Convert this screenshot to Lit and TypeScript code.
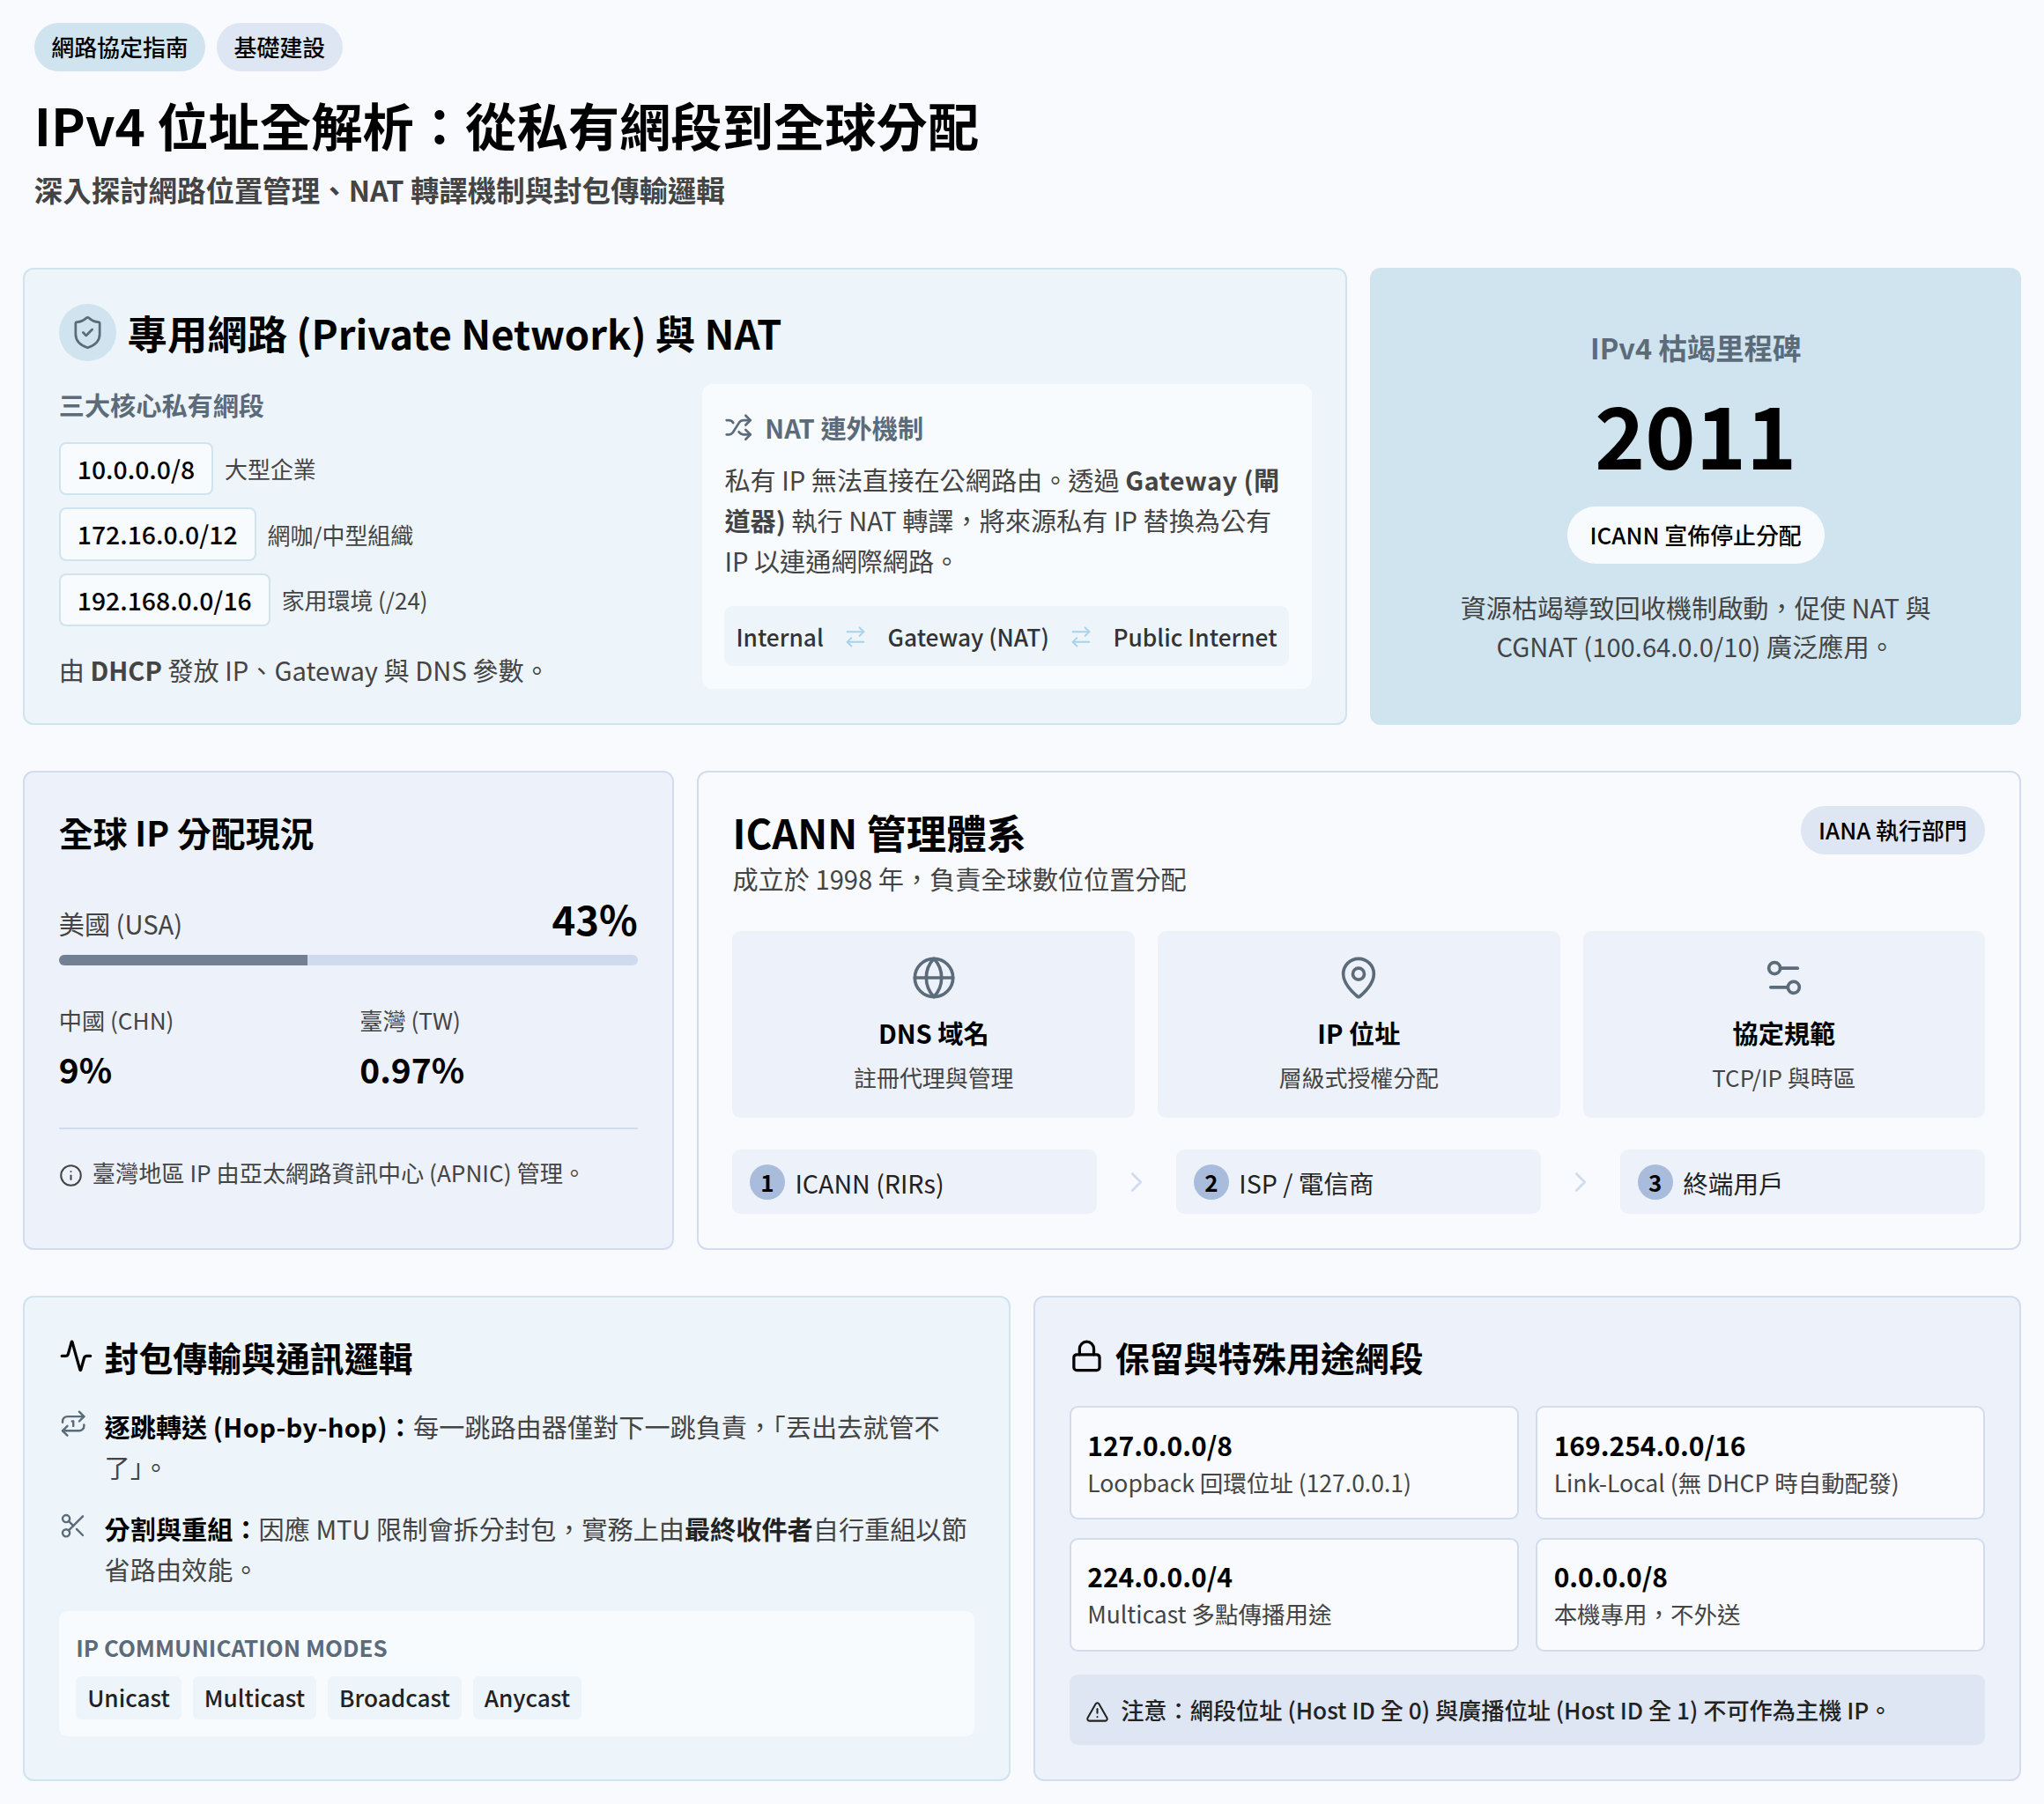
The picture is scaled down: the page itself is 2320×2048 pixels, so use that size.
import { LitElement, html, css, svg } from "lit";
import { customElement } from "lit/decorators.js";

const I: Record<string, any> = {
  shield: svg`<path d="M20 13c0 5-3.5 7.5-7.66 8.95a1 1 0 0 1-.67-.01C7.5 20.5 4 18 4 13V6a1 1 0 0 1 1-1c2 0 4.5-1.2 6.24-2.72a1.17 1.17 0 0 1 1.52 0C14.51 3.81 17 5 19 5a1 1 0 0 1 1 1z"/><path d="m9 12 2 2 4-4"/>`,
  shuffle: svg`<path d="m18 14 4 4-4 4"/><path d="m18 2 4 4-4 4"/><path d="M2 18h1.973a4 4 0 0 0 3.3-1.7l5.454-8.6a4 4 0 0 1 3.3-1.7H22"/><path d="M2 6h1.972a4 4 0 0 1 3.6 2.2"/><path d="M22 18h-6.041a4 4 0 0 1-3.3-1.8l-.359-.45"/>`,
  swap: svg`<path d="m16 3 4 4-4 4"/><path d="M20 7H4"/><path d="m8 21-4-4 4-4"/><path d="M4 17h16"/>`,
  globe: svg`<circle cx="12" cy="12" r="10"/><path d="M12 2a14.5 14.5 0 0 0 0 20 14.5 14.5 0 0 0 0-20"/><path d="M2 12h20"/>`,
  pin: svg`<path d="M20 10c0 4.993-5.539 10.193-7.399 11.799a1 1 0 0 1-1.202 0C9.539 20.193 4 14.993 4 10a8 8 0 0 1 16 0"/><circle cx="12" cy="10" r="3"/>`,
  sliders: svg`<path d="M14 17H5"/><path d="M19 7h-9"/><circle cx="17" cy="17" r="3"/><circle cx="7" cy="7" r="3"/>`,
  info: svg`<circle cx="12" cy="12" r="10"/><path d="M12 16v-4"/><path d="M12 8h.01"/>`,
  activity: svg`<path d="M22 12h-2.48a2 2 0 0 0-1.93 1.46l-2.35 8.36a.25.25 0 0 1-.48 0L9.24 2.18a.25.25 0 0 0-.48 0l-2.35 8.36A2 2 0 0 1 4.49 12H2"/>`,
  repeat: svg`<path d="m17 2 4 4-4 4"/><path d="M3 11v-1a4 4 0 0 1 4-4h14"/><path d="m7 22-4-4 4-4"/><path d="M21 13v1a4 4 0 0 1-4 4H3"/><path d="M11 10h1v4"/>`,
  scissors: svg`<circle cx="6" cy="6" r="3"/><path d="M8.12 8.12 12 12"/><path d="M20 4 8.12 15.88"/><circle cx="6" cy="18" r="3"/><path d="M14.8 14.8 20 20"/>`,
  lock: svg`<rect x="3" y="11" width="18" height="11" rx="2"/><path d="M7 11V7a5 5 0 0 1 10 0v4"/>`,
  alert: svg`<path d="m21.73 18-8-14a2 2 0 0 0-3.48 0l-8 14A2 2 0 0 0 4 21h16a2 2 0 0 0 1.73-3"/><path d="M12 9v4"/><path d="M12 17h.01"/>`,
  chevron: svg`<path d="m9 18 6-6-6-6"/>`,
};
const icon = (n: string, cls: string) =>
  html`<svg class="${cls}" viewBox="0 0 24 24" fill="none" stroke="currentColor" stroke-width="2" stroke-linecap="round" stroke-linejoin="round">${I[n]}</svg>`;

@customElement("app-root")
export class AppRoot extends LitElement {
  static styles = css`
    :host { display: block; background: #f8fafd; color: #000; font-family: "Noto Sans CJK TC", "Noto Sans", sans-serif; font-size: 29.16px; line-height: 1.6; min-height: 2048px; }
    * { box-sizing: border-box; }
    .page { padding: 26px 25.92px 26px; }
    header { padding: 0 12.96px; margin-bottom: 67.2px; }
    .tags { display: flex; gap: 12.96px; margin-bottom: 22px; }
    .tag { font-size: 25.92px; font-weight: 500; padding: 6.48px 19.44px; border-radius: 32px; line-height: 42px; }
    .t1 { background: #cfe4ef; } .t2 { background: #dee5f3; }
    h1 { font-size: 58.32px; line-height: 1.3; font-weight: 700; margin: 0 0 13px; }
    .sub { font-size: 32.45px; line-height: 1.4; font-weight: 700; color: #444; margin: 0; }
    .grid { display: grid; grid-template-columns: repeat(6, 1fr); gap: 52px 25.92px; }
    .card { border-radius: 12px; padding: 38.88px; border: 2px solid; }
    .blue { background: #edf4fa; border-color: #cfe4ef; }
    .lav { background: #edf1f9; border-color: #d2dcef; }
    .white { background: #f8fafd; border-color: #d2dcef; }
    .s4 { grid-column: span 4; } .s2 { grid-column: span 2; } .s3 { grid-column: span 3; }

    .nat-title { display: flex; align-items: center; gap: 13px; margin-bottom: 25.92px; height: 64.8px; }
    .badge { width: 64.8px; height: 64.8px; border-radius: 50%; background: #cfe4ef; display: flex; align-items: center; justify-content: center; color: #5c6b7a; }
    .i32 { width: 41px; height: 41px; stroke-width: 1.6; }
    h2 { font-size: 45.36px; line-height: 1.4; font-weight: 700; margin: 0; }
    .cols { display: grid; grid-template-columns: 1fr 692px; gap: 32px; align-items: stretch; }
    .lbl { font-size: 29.16px; font-weight: 700; color: #5c6b7a; line-height: 46.66px; margin-bottom: 19px; }
    .net { display: flex; align-items: center; gap: 12.96px; margin-bottom: 14px; font-size: 25.92px; color: #444; }
    .code { font-size: 28.35px; font-weight: 500; color: #000; background: #f8fbfe; border: 2px solid #cfe4ef; border-radius: 8px; padding: 5px 19px; line-height: 46px; height: 60.5px; }
    .note { font-size: 29.16px; color: #444; margin: 31px 0 0; line-height: 36px; }
    b { font-weight: 700; }
    .panel { background: #f8fbfe; border-radius: 12px; padding: 25.92px; }
    .ph { display: flex; align-items: center; gap: 13.5px; font-size: 29.16px; font-weight: 700; color: #5c6b7a; line-height: 46.66px; margin-bottom: 12.2px; }
    .i30 { width: 32.4px; height: 32.4px; }
    .ptext { margin: 0; color: #444; font-size: 29.16px; line-height: 46.2px; }
    .ls { letter-spacing: 0.35px; }
    .flow { margin-top: 28.8px; background: #edf4fa; border-radius: 9.6px; height: 68px; padding: 2px 13px 0; display: flex; align-items: center; justify-content: space-between; font-size: 26.25px; color: #333; font-weight: 500; }
    .flow svg { width: 28px; height: 28px; color: #a9d2e9; stroke-width: 1.7; }

    .hero { grid-column: span 2; background: #cfe4ef; border-radius: 12px; display: flex; flex-direction: column; align-items: center; justify-content: center; text-align: center; padding: 38px; }
    .h-lbl { font-size: 32.4px; font-weight: 700; color: #5c6b7a; line-height: 1.4; }
    .year { font-size: 97.2px; font-weight: 700; line-height: 1.2; margin: 16px 0 26px; }
    .pill { background: #f8fbfe; border-radius: 32px; font-size: 25.92px; font-weight: 500; padding: 11px 25.92px 13px; line-height: 41px; }
    .h-txt { font-size: 29.16px; color: #444; line-height: 44.4px; margin: 26.5px 0 0; }

    .s-title { font-size: 38.88px; font-weight: 700; line-height: 1.5; margin: -0.5px 0 39.5px; }
    .us { display: flex; justify-content: space-between; align-items: flex-end; font-size: 29.16px; color: #444; }
    .us strong { font-size: 45.36px; font-weight: 700; color: #000; line-height: 1.3; }
    .bar { height: 12px; border-radius: 6px; background: #cfdaee; overflow: hidden; margin-top: 12px; }
    .bar i { display: block; height: 100%; background: #737f92; }
    .two { display: grid; grid-template-columns: 1fr 1fr; gap: 0 25.92px; margin-top: 41.5px; }
    .two span { display: block; font-size: 26.2px; color: #444; line-height: 41.5px; }
    .two strong { display: block; font-size: 38.88px; font-weight: 700; line-height: 1.5; margin-top: 5px; }
    .foot { border-top: 2px solid #d2dcef; margin-top: 38px; padding-top: 28.5px; display: flex; align-items: center; gap: 11px; font-size: 26.2px; color: #444; line-height: 1.6; }
    .i24 { width: 27px; height: 27px; flex: none; margin-top: 5px; stroke-width: 1.8; }

    .ic-head { display: flex; justify-content: space-between; align-items: flex-start; margin: -1px 0 37.5px; }
    .ic-head h2 { line-height: 1.3; }
    .ic-head p { margin: 2.5px 0 0; font-size: 29.16px; color: #444; line-height: 1.5; }
    .pill2 { background: #dee5f3; border-radius: 32px; font-size: 25.92px; font-weight: 500; padding: 6.48px 20.5px; line-height: 42px; }
    .three { display: grid; grid-template-columns: repeat(3, 1fr); gap: 25.92px; }
    .tile { background: #edf1f9; border-radius: 9.6px; padding: 27px 25.6px 25.6px; display: flex; flex-direction: column; align-items: center; text-align: center; color: #5c6b7a; height: 211.5px; }
    .i48 { width: 52px; height: 52px; stroke-width: 1.7; }
    .tile strong { font-size: 29.16px; font-weight: 700; color: #000; margin-top: 12.5px; line-height: 46px; }
    .tile span { font-size: 25.92px; color: #444; line-height: 41px; margin-top: 7px; }
    .steps { display: grid; grid-template-columns: 1fr 90px 1fr 90px 1fr; align-items: center; margin-top: 36.5px; }
    .step { background: #edf1f9; border-radius: 9.6px; height: 73px; display: flex; align-items: center; gap: 11.5px; padding: 2px 19.44px 0; font-size: 28.6px; color: #222; }
    .num { width: 40px; height: 40px; border-radius: 50%; background: #a9bcdc; color: #000; font-size: 25.92px; font-weight: 700; display: flex; align-items: center; justify-content: center; margin-top: -2px; }
    .steps > svg { width: 38px; height: 38px; justify-self: center; color: #d2dcef; stroke-width: 1.7; }

    .h3 { display: flex; align-items: center; gap: 12.96px; font-size: 38.88px; font-weight: 700; line-height: 1.5; margin: -1.5px 0 27.42px; }
    .i36 { width: 38.88px; height: 38.88px; flex: none; }
    .li { display: flex; gap: 19.44px; font-size: 29.16px; color: #444; line-height: 46px; margin-bottom: 24px; }
    .li svg { width: 32.4px; height: 32.4px; flex: none; color: #5c6b7a; margin-top: 4px; stroke-width: 1.8; }
    .li b.k { color: #000; }
    .li b { color: #222; }
    .modes { background: #f8fbfe; border-radius: 9.6px; padding: 19.44px; margin-top: 25px; }
    .modes h4 { margin: 0 0 13px; font-size: 25.92px; font-weight: 700; color: #5c6b7a; line-height: 1.6; }
    .chips { display: flex; gap: 12.96px; }
    .chip { background: #edf4fa; border-radius: 6.4px; padding: 0 12.96px; font-size: 26.2px; font-weight: 500; color: #222; line-height: 48.6px; }
    .res { display: grid; grid-template-columns: 1fr 1fr; gap: 20.4px 19.44px; }
    .r { background: #f8fafd; border: 2px solid #d2dcef; border-radius: 9.6px; padding: 19.2px 18.4px; height: 129px; }
    .r strong { display: block; font-size: 30px; font-weight: 700; line-height: 44px; }
    .r span { display: block; font-size: 26.5px; color: #444; line-height: 42.6px; }
    .warn { margin-top: 25.92px; background: #dee5f3; border-radius: 9.6px; height: 80.6px; display: flex; align-items: center; gap: 12.96px; padding: 2px 18.4px 0; font-size: 26.2px; color: #222; font-weight: 500; }
    .warn svg { margin-top: 4px; }
  `;

  render() {
    return html`<div class="page">
      <header>
        <div class="tags"><span class="tag t1">網路協定指南</span><span class="tag t2">基礎建設</span></div>
        <h1>IPv4 位址全解析：從私有網段到全球分配</h1>
        <p class="sub">深入探討網路位置管理、NAT 轉譯機制與封包傳輸邏輯</p>
      </header>
      <div class="grid">
        <section class="card blue s4">
          <div class="nat-title"><div class="badge">${icon("shield", "i32")}</div><h2>專用網路 (Private Network) 與 NAT</h2></div>
          <div class="cols">
            <div>
              <div class="lbl">三大核心私有網段</div>
              <div class="net"><span class="code">10.0.0.0/8</span>大型企業</div>
              <div class="net"><span class="code">172.16.0.0/12</span>網咖/中型組織</div>
              <div class="net"><span class="code">192.168.0.0/16</span>家用環境 (/24)</div>
              <p class="note">由 <b>DHCP</b> 發放 IP、Gateway 與 DNS 參數。</p>
            </div>
            <div class="panel">
              <div class="ph">${icon("shuffle", "i30")}NAT 連外機制</div>
              <p class="ptext">私有 IP 無法直接在公網路由。透過 <b><span class="ls">Gateway (</span>閘道器)</b> 執行 NAT 轉譯，將來源私有 IP 替換為公有 IP 以連通網際網路。</p>
              <div class="flow"><span>Internal</span>${icon("swap", "")}<span>Gateway (NAT)</span>${icon("swap", "")}<span>Public Internet</span></div>
            </div>
          </div>
        </section>
        <section class="hero">
          <div class="h-lbl">IPv4 枯竭里程碑</div>
          <div class="year">2011</div>
          <div class="pill">ICANN 宣佈停止分配</div>
          <p class="h-txt">資源枯竭導致回收機制啟動，促使 NAT 與<br>CGNAT (100.64.0.0/10) 廣泛應用。</p>
        </section>

        <section class="card lav s2">
          <h3 class="s-title">全球 IP 分配現況</h3>
          <div class="us"><span>美國 (USA)</span><strong>43%</strong></div>
          <div class="bar"><i style="width:43%"></i></div>
          <div class="two">
            <div><span>中國 (CHN)</span><strong>9%</strong></div>
            <div><span>臺灣 (TW)</span><strong>0.97%</strong></div>
          </div>
          <div class="foot">${icon("info", "i24")}臺灣地區 IP 由亞太網路資訊中心 (APNIC) 管理。</div>
        </section>
        <section class="card white s4">
          <div class="ic-head">
            <div><h2>ICANN 管理體系</h2><p>成立於 1998 年，負責全球數位位置分配</p></div>
            <span class="pill2">IANA 執行部門</span>
          </div>
          <div class="three">
            <div class="tile">${icon("globe", "i48")}<strong>DNS 域名</strong><span>註冊代理與管理</span></div>
            <div class="tile">${icon("pin", "i48")}<strong>IP 位址</strong><span>層級式授權分配</span></div>
            <div class="tile">${icon("sliders", "i48")}<strong>協定規範</strong><span>TCP/IP 與時區</span></div>
          </div>
          <div class="steps">
            <div class="step"><span class="num">1</span>ICANN (RIRs)</div>${icon("chevron", "")}
            <div class="step"><span class="num">2</span>ISP / 電信商</div>${icon("chevron", "")}
            <div class="step"><span class="num">3</span>終端用戶</div>
          </div>
        </section>

        <section class="card blue s3">
          <div class="h3">${icon("activity", "i36")}封包傳輸與通訊邏輯</div>
          <div class="li">${icon("repeat", "")}<div><b class="k">逐跳轉送 <span class="ls">(Hop-by-hop)</span>：</b>每一跳路由器僅對下一跳負責，「丟出去就管不了」。</div></div>
          <div class="li">${icon("scissors", "")}<div><b class="k">分割與重組：</b>因應 MTU 限制會拆分封包，實務上由<b>最終收件者</b>自行重組以節省路由效能。</div></div>
          <div class="modes">
            <h4>IP COMMUNICATION MODES</h4>
            <div class="chips"><span class="chip">Unicast</span><span class="chip">Multicast</span><span class="chip">Broadcast</span><span class="chip">Anycast</span></div>
          </div>
        </section>
        <section class="card lav s3">
          <div class="h3">${icon("lock", "i36")}保留與特殊用途網段</div>
          <div class="res">
            <div class="r"><strong>127.0.0.0/8</strong><span>Loopback 回環位址 (127.0.0.1)</span></div>
            <div class="r"><strong>169.254.0.0/16</strong><span>Link-Local (無 DHCP 時自動配發)</span></div>
            <div class="r"><strong>224.0.0.0/4</strong><span>Multicast 多點傳播用途</span></div>
            <div class="r"><strong>0.0.0.0/8</strong><span>本機專用，不外送</span></div>
          </div>
          <div class="warn">${icon("alert", "i24")}注意：網段位址 (Host ID 全 0) 與廣播位址 (Host ID 全 1) 不可作為主機 IP。</div>
        </section>
      </div>
    </div>`;
  }
}
